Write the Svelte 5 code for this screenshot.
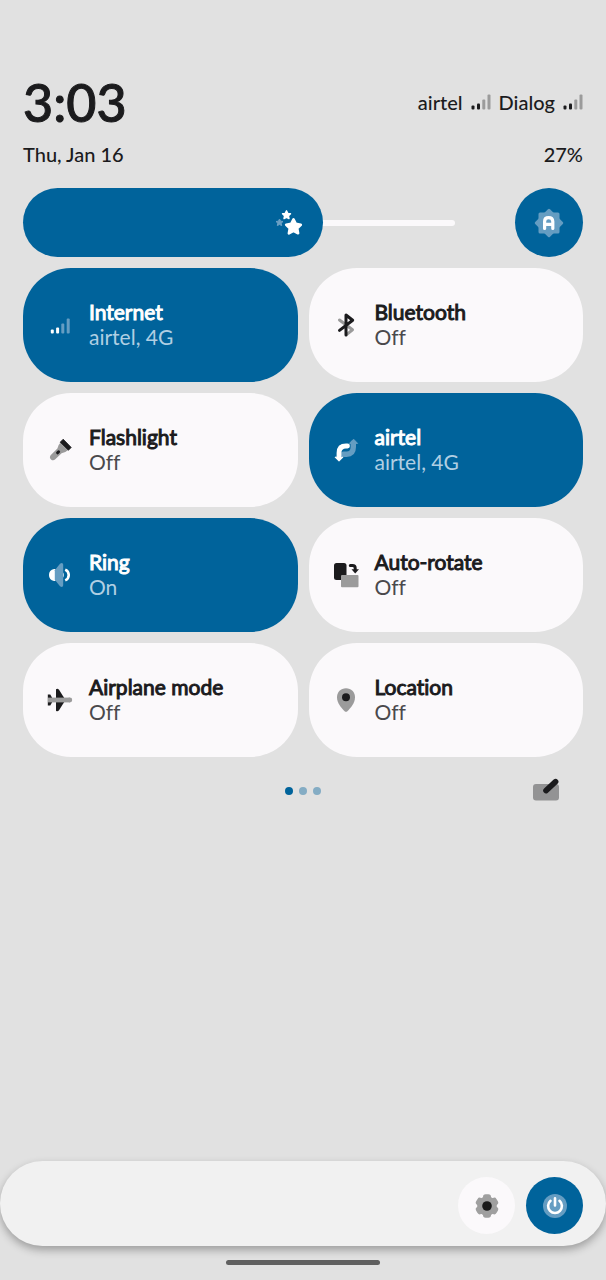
<script>
  let brightness = $state(177);
  const maxBrightness = 255;
  let page = $state(0);

  let tiles = $state([
    { icon: 'signal', title: 'Internet', status: 'airtel, 4G', on: true },
    { icon: 'bluetooth', title: 'Bluetooth', status: 'Off', on: false },
    { icon: 'flashlight', title: 'Flashlight', status: 'Off', on: false },
    { icon: 'data', title: 'airtel', status: 'airtel, 4G', on: true },
    { icon: 'ring', title: 'Ring', status: 'On', on: true },
    { icon: 'rotate', title: 'Auto-rotate', status: 'Off', on: false },
    { icon: 'airplane', title: 'Airplane mode', status: 'Off', on: false },
    { icon: 'location', title: 'Location', status: 'Off', on: false }
  ]);
</script>

{#snippet bars()}
  <svg class="bars" viewBox="0 0 20 16" aria-hidden="true">
    <rect x="0.5" y="11.5" width="3" height="4" rx="1" fill="currentColor" />
    <rect x="6" y="9.5" width="3" height="6" rx="1" fill="currentColor" />
    <rect x="11.3" y="5.5" width="3" height="10" rx="1" fill="var(--soft)" />
    <rect x="16.5" y="0.5" width="3" height="15" rx="1" fill="var(--soft)" />
  </svg>
{/snippet}

{#snippet glyph(name)}
  <svg class="icon" viewBox="0 0 26 26" aria-hidden="true">
    {#if name === 'signal'}
      <rect x="3.8" y="17.5" width="3" height="4" rx="1" fill="currentColor" />
      <rect x="9.1" y="15.5" width="3" height="6" rx="1" fill="currentColor" />
      <rect x="14.3" y="11.5" width="3" height="10" rx="1" fill="var(--soft)" />
      <rect x="19.7" y="6.5" width="3" height="15" rx="1" fill="var(--soft)" />
    {:else if name === 'bluetooth'}
      <g fill="none" stroke-width="3" stroke-linecap="round" stroke-linejoin="round">
        <path d="M6.5 8 19.5 17.8 13.5 22.6" stroke="var(--soft)" />
        <path d="M13 23V3L19.7 8.2 6.5 18.4" stroke="currentColor" />
      </g>
    {:else if name === 'flashlight'}
      <path d="M13.4 5.8 20.8 13.2Q18 15.9 14.6 16.2L8 22.6Q6 24.2 4 22.4T3.6 18.2L10.4 11.6Q10.8 8.2 13.4 5.8Z" fill="var(--soft)" />
      <path d="M16.2 2.2 24.2 10.4 21.4 13.3 13.2 5.2Z" fill="currentColor" stroke="currentColor" stroke-width="0.8" stroke-linejoin="round" />
      <path d="M10.6 15.8 11.6 14.8" stroke="currentColor" stroke-width="3" stroke-linecap="round" />
    {:else if name === 'data'}
      <path d="M10.5 17.2H13.5Q20.3 17.2 20.3 10V6" fill="none" stroke="var(--soft)" stroke-width="5.4" stroke-linecap="round" />
      <path d="M16.4 6.4 20.6 2.2 24.6 6.4Z" fill="var(--soft)" stroke="var(--soft)" stroke-linejoin="round" />
      <path d="M14.5 9H13Q6 9 6 16V20" fill="none" stroke="currentColor" stroke-width="4.8" stroke-linecap="round" />
      <path d="M2 20.2 6 24.2 10 20.2Z" fill="currentColor" stroke="currentColor" stroke-linejoin="round" />
    {:else if name === 'ring'}
      <path d="M8.5 7H7Q2 8 2 13T7 19H8.5Z" fill="currentColor" />
      <path d="M15 9.6A4 4 0 0 1 15 16.4Z" fill="currentColor" />
      <path d="M18.2 7.6A5.9 5.9 0 0 1 18.2 18.4" fill="none" stroke="currentColor" stroke-width="2.6" />
      <path d="M7.8 8.2 13 1.8Q15.8 -.2 16.2 2.8V23.2Q15.8 26.2 13 24.2L7.8 17.8Z" fill="var(--soft)" />
    {:else if name === 'rotate'}
      <rect x="1" y="1" width="12.5" height="17" rx="2.5" fill="currentColor" />
      <rect x="8" y="13" width="17.5" height="12.3" rx="1" fill="var(--soft)" />
      <path d="M17.3 3.4H19.5Q22.2 3.4 22.2 6V7.5" fill="none" stroke="currentColor" stroke-width="3" stroke-linecap="round" />
      <path d="M18.5 7.2H26L22.2 11.4Z" fill="currentColor" />
    {:else if name === 'airplane'}
      <path d="M9 13V2.3Q10.5 .8 12 2.8L18.5 13 12 23.3Q10.5 25.2 9 23.7Z" fill="currentColor" />
      <path d="M.8 7.4H3.3L6.3 13 3.3 18.6H.8Z" fill="currentColor" />
      <path d="M1 13H22.8" stroke="var(--soft)" stroke-width="4.8" />
      <circle cx="22.8" cy="13" r="2.4" fill="var(--soft)" />
    {:else if name === 'location'}
      <path d="M13 1.2C7.8 1.2 4 5 4 10.2C4 16 8.5 21 11.6 24.2Q13 25.4 14.4 24.2C17.5 21 22 16 22 10.2C22 5 18.2 1.2 13 1.2Z" fill="var(--soft)" />
      <circle cx="13" cy="10.3" r="4" fill="currentColor" />
    {/if}
  </svg>
{/snippet}

<div class="shade">
  <header>
    <div class="row">
      <time class="clock">3:03</time>
      <div class="carriers">
        <span>airtel</span>
        {@render bars()}
        <span>Dialog</span>
        {@render bars()}
      </div>
    </div>
    <div class="row date">
      <span>Thu, Jan 16</span>
      <span>27%</span>
    </div>
  </header>

  <main>
    <div class="brightness">
      <div class="slider">
        <div class="track"></div>
        <div class="fill" style="width: {(brightness / maxBrightness) * 100}%">
          <svg viewBox="0 0 28 28" aria-hidden="true">
            <g stroke-linejoin="round">
              <path d="M18.5 10.4 20.8 14.9 25.8 15.7 22.2 19.2 23.1 24.3 18.5 21.9 13.9 24.3 14.8 19.2 11.2 15.7 16.2 14.9Z" fill="#fff" stroke="#fff" stroke-width="2.6" />
              <path d="M11.5 1.8 12.8 4.4 15.5 4.8 13.5 6.8 14 9.6 11.5 8.3 9 9.6 9.5 6.8 7.5 4.8 10.2 4.4Z" fill="#fff" stroke="#fff" stroke-width="1.4" />
              <path d="M4.5 10 5.6 12.2 8 12.5 6.2 14.2 6.7 16.6 4.5 15.5 2.3 16.6 2.8 14.2 1 12.5 3.4 12.2Z" fill="#6ba0c4" stroke="#6ba0c4" />
            </g>
          </svg>
        </div>
        <input type="range" min="0" max={maxBrightness} bind:value={brightness} aria-label="Brightness" />
      </div>
      <button class="auto" aria-label="Adaptive brightness">
        <svg viewBox="0 0 32 32" aria-hidden="true">
          <g fill="#659dc2">
            <rect x="5.5" y="5.5" width="21" height="21" rx="1.5" />
            <rect x="5.5" y="5.5" width="21" height="21" rx="1.5" transform="rotate(45 16 16)" />
          </g>
          <path d="M11.6 21.5V14.5Q11.6 10.7 15.6 10.7T19.8 14.5V21.5M11.6 17.4H19.8" fill="none" stroke="#fff" stroke-width="3.2" stroke-linecap="round" />
        </svg>
      </button>
    </div>

    <div class="tiles">
      {#each tiles as tile}
        <button class="tile" class:on={tile.on} aria-pressed={tile.on} onclick={() => (tile.on = !tile.on)}>
          {@render glyph(tile.icon)}
          <span class="label">
            <span class="title">{tile.title}</span>
            <span class="status">{tile.status}</span>
          </span>
        </button>
      {/each}
    </div>

    <div class="pager">
      <div class="dots">
        {#each [0, 1, 2] as n}
          <button class:current={page === n} aria-label="Page {n + 1}" onclick={() => (page = n)}></button>
        {/each}
      </div>
      <button class="edit" aria-label="Edit tiles">
        <svg viewBox="0 0 30 28" aria-hidden="true">
          <rect x="2" y="7" width="26" height="16.5" rx="3" fill="#939394" />
          <path d="M15 13.6 24.6 4.6" stroke="#1b1b1d" stroke-width="5.6" stroke-linecap="round" />
        </svg>
      </button>
    </div>
  </main>

  <footer>
    <button class="round" aria-label="Settings">
      <svg viewBox="0 0 28 28" aria-hidden="true">
        <g fill="#9f9f9f">
          <circle cx="14" cy="14" r="9.8" />
          {#each [0, 60, 120] as angle}
            <rect x="10" y="2.3" width="8" height="23.4" rx="2.6" transform="rotate({angle} 14 14)" />
          {/each}
        </g>
        <circle cx="14" cy="14" r="4.8" fill="#1a1a1a" />
      </svg>
    </button>
    <button class="round power" aria-label="Power">
      <svg viewBox="0 0 28 28" aria-hidden="true">
        <circle cx="14" cy="14" r="12" fill="#659dc2" />
        <path d="M9.5 8.8A6.9 6.9 0 1 0 18.5 8.8M14 6.3V13.4" fill="none" stroke="#fff" stroke-width="2.6" stroke-linecap="round" />
      </svg>
    </button>
  </footer>
  <div class="home"></div>
</div>

<style>
  :global(body) {
    margin: 0;
    background: #e1e1e1;
  }

  .shade {
    box-sizing: border-box;
    min-height: 100vh;
    padding-top: 76px;
    display: flex;
    flex-direction: column;
    color: #1b1b1d;
    font-family: Lato, 'Open Sans', sans-serif;
    font-size: 20px;
    font-weight: 500;
    line-height: 26px;
    font-variant-ligatures: none;
    --soft: #9b9b9b;
  }

  button {
    margin: 0;
    padding: 0;
    border: 0;
    background: none;
    color: inherit;
    font: inherit;
    cursor: pointer;
  }

  svg {
    display: block;
    flex: none;
  }

  header,
  main {
    padding: 0 23px;
  }

  .row {
    display: flex;
    align-items: center;
    justify-content: space-between;
  }

  .clock {
    font-size: 52px;
    line-height: 52px;
    -webkit-text-stroke: 1px currentColor;
  }

  .carriers {
    display: flex;
    align-items: center;
    gap: 8px;
  }

  .bars {
    width: 20px;
    height: 16px;
  }

  .date {
    padding: 13px 0 21px;
  }

  .brightness {
    display: flex;
    gap: 60px;
    margin-bottom: 11px;
  }

  .slider {
    flex: 1;
    height: 69px;
    display: grid;
    align-items: center;
  }

  .slider > * {
    grid-area: 1 / 1;
  }

  .track {
    height: 6px;
    border-radius: 3px;
    background: #fbf9fb;
  }

  .fill {
    box-sizing: border-box;
    height: 69px;
    padding-right: 20px;
    border-radius: 35px;
    background: #00639b;
    display: flex;
    align-items: center;
    justify-content: flex-end;
  }

  .fill svg {
    width: 28px;
    height: 28px;
  }

  .slider input {
    width: 100%;
    height: 100%;
    margin: 0;
    opacity: 0;
    cursor: pointer;
  }

  .auto {
    width: 68px;
    height: 69px;
    border-radius: 50%;
    background: #00639b;
    display: grid;
    place-items: center;
  }

  .auto svg {
    width: 32px;
    height: 32px;
  }

  .tiles {
    display: grid;
    grid-template-columns: 1fr 1fr;
    gap: 11px;
  }

  .tile {
    height: 114px;
    padding: 0 24px;
    border-radius: 48px;
    background: #fbf9fb;
    display: flex;
    align-items: center;
    gap: 16px;
    text-align: left;
  }

  .tile.on {
    background: #00639b;
    color: #fff;
    --soft: #659dc2;
  }

  .icon {
    width: 26px;
    height: 26px;
  }

  .label {
    display: flex;
    flex-direction: column;
    padding-bottom: 2px;
    font-size: 21px;
    font-weight: 400;
    line-height: 25px;
  }

  .title {
    -webkit-text-stroke: 1px currentColor;
  }

  .status {
    color: #4a494c;
  }

  .on .status {
    color: #b0cfe3;
  }

  .pager {
    display: grid;
    grid-template-columns: 1fr auto 1fr;
    align-items: center;
    padding: 20px 22px 0;
  }

  .dots {
    grid-column: 2;
    display: flex;
    gap: 6px;
  }

  .dots button {
    width: 8px;
    height: 8px;
    border-radius: 50%;
    background: #84acc4;
  }

  .dots .current {
    background: #00639b;
  }

  .edit {
    justify-self: end;
  }

  .edit svg {
    width: 30px;
    height: 28px;
  }

  footer {
    margin-top: auto;
    padding: 16px 23px 12px;
    border-radius: 43px;
    background: #f1f1f1;
    box-shadow: 0 4px 9px rgba(0, 0, 0, 0.3);
    display: flex;
    justify-content: flex-end;
    gap: 11px;
  }

  .round {
    width: 57px;
    height: 57px;
    border-radius: 50%;
    background: #fbf9fb;
    display: grid;
    place-items: center;
  }

  .round.power {
    background: #00639b;
  }

  .round svg {
    width: 28px;
    height: 28px;
  }

  .home {
    width: 154px;
    height: 5px;
    margin: 14px auto 15px;
    border-radius: 3px;
    background: #606060;
  }
</style>
